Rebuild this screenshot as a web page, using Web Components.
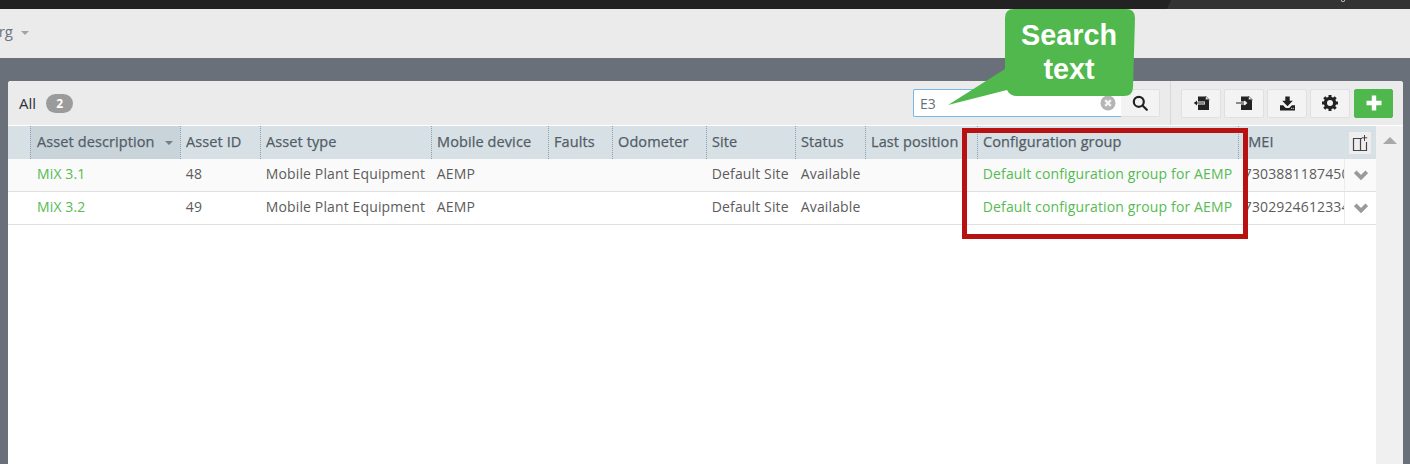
<!DOCTYPE html>
<html>
<head>
<meta charset="utf-8">
<title>Assets</title>
<style>
  html, body { margin: 0; height: 464px; overflow: hidden; }
  body { font-family: "Open Sans", sans-serif; font-size: 14px; background: #697079; }
</style>
</head>
<body>
<app-shell>
  <top-strip></top-strip>
  <org-bar>rg</org-bar>
  <asset-panel>
    <panel-toolbar></panel-toolbar>
    <asset-table></asset-table>
  </asset-panel>
  <help-overlay></help-overlay>
</app-shell>

<script>
class AppShell extends HTMLElement {
    connectedCallback() {
        this.attachShadow({ mode: 'open' });
        this.shadowRoot.innerHTML = `
            <style>
                :host { display: flex; flex-direction: column; height: 464px; position: relative; overflow: hidden; }
            </style>
            <slot></slot>
        `;
    }
}

class TopStrip extends HTMLElement {
    connectedCallback() {
        this.attachShadow({ mode: 'open' });
        this.shadowRoot.innerHTML = `
            <style>
                :host { display: flex; justify-content: flex-end; height: 9px; background: #222; flex: none; }
                .tab { width: 243px; background: #333; clip-path: polygon(4px 0, 100% 0, 100% 100%, 0 100%); overflow: hidden; position: relative; }
                .tab i { position: absolute; left: 174px; top: -1px; width: 4px; height: 3px; border: 1px solid #ddd; border-radius: 2px; box-sizing: border-box; }
            </style>
            <div class="tab"><i></i></div>
        `;
    }
}

class OrgBar extends HTMLElement {
    connectedCallback() {
        this.attachShadow({ mode: 'open' });
        this.shadowRoot.innerHTML = `
            <style>
                :host { display: flex; align-items: center; height: 49px; flex: none; background: #ebebeb; color: #6b7480; font-size: 15px; padding-bottom: 2px; box-sizing: border-box; }
                .caret { width: 0; height: 0; border: 4px solid transparent; border-top: 4px solid #a3a3a3; border-bottom: 0; }
                .clip { width: 13px; overflow: hidden; direction: rtl; margin-right: 8px; margin-top: -3px; }
            </style>
            <div class="clip"><slot></slot></div>
            <span class="caret"></span>
        `;
    }
}

class AssetPanel extends HTMLElement {
    connectedCallback() {
        this.attachShadow({ mode: 'open' });
        this.shadowRoot.innerHTML = `
            <style>
                :host { display: flex; flex-direction: column; flex: 1; margin: 23px 7px 0 8px; background: #fff; border-radius: 3px 3px 0 0; overflow: hidden; }
            </style>
            <slot></slot>
        `;
    }
}

class SearchBox extends HTMLElement {
    connectedCallback() {
        this.attachShadow({ mode: 'open' });
        this.shadowRoot.innerHTML = `
            <style>
                :host { display: flex; height: 28px; }
                .field { width: 208px; box-sizing: border-box; border: 1px solid #7ab8ea; border-right: 0; border-radius: 2px 0 0 2px; background: #fff; color: #66707a; font-size: 14px; display: flex; align-items: center; justify-content: space-between; padding: 0 5px 0 6px; }
                .go { width: 39px; box-sizing: border-box; border: 1px solid #e0e0e0; border-left: 0; border-radius: 0 2px 2px 0; background: #f3f3f3; display: flex; align-items: center; justify-content: center; }
            </style>
            <div class="field">
                <span>E3</span>
                <svg width="16" height="16" viewBox="0 0 16 16">
                    <circle cx="8" cy="8" r="7.5" fill="#b5b5b5"/>
                    <path d="M5.2 5.2l5.6 5.6M10.8 5.2l-5.6 5.6" stroke="#f2f2f2" stroke-width="2.4"/>
                </svg>
            </div>
            <div class="go">
                <svg width="16" height="16" viewBox="0 0 16 16" fill="none" stroke="#222" stroke-width="2.2">
                    <circle cx="6.8" cy="6.8" r="5"/>
                    <path d="M10.5 10.5l4.3 4.3" stroke-linecap="round"/>
                </svg>
            </div>
        `;
    }
}

class ToolButton extends HTMLElement {
    connectedCallback() {
        this.attachShadow({ mode: 'open' });
        this.shadowRoot.innerHTML = `
            <style>
                :host { display: flex; align-items: center; justify-content: center; width: 40px; height: 29px; box-sizing: border-box; border: 1px solid #e0e0e0; border-radius: 2px; background: #f3f3f3; }
                :host([primary]) { width: 39px; border-color: #4fb84c; background: #4fb84c; }
            </style>
            <slot></slot>
        `;
    }
}

class PanelToolbar extends HTMLElement {
    connectedCallback() {
        this.attachShadow({ mode: 'open' });
        this.shadowRoot.innerHTML = `
            <style>
                :host { display: flex; align-items: center; height: 44px; flex: none; background: #ebebeb; padding: 0 10px 0 11px; margin-bottom: 1px; box-sizing: border-box; }
                .all { color: #2c3238; font-size: 15px; font-weight: 400; }
                .count { margin-left: 10px; background: #9b9b9b; color: #fff; font-size: 12px; font-weight: 700; line-height: 19px; width: 27px; text-align: center; border-radius: 10px; }
                search-box { margin-left: auto; }
                .sep { width: 1px; height: 44px; background: #d8d8d8; margin: 0 10px 0 10px; }
                .tools { display: flex; gap: 3px; }
                tool-button[primary] { margin-left: 1px; }
            </style>
            <span class="all">All</span>
            <span class="count">2</span>
            <search-box></search-box>
            <div class="sep"></div>
            <div class="tools">
                <tool-button>
                    <svg width="18" height="16" viewBox="0 0 18 16">
                        <path d="M6 1.500h7l4 4V15H6z" fill="#222"/>
                        <path d="M13.500 1l3.700 3.700h-3.700z" fill="#f3f3f3" stroke="#222" stroke-width=".6"/>
                        <path d="M2 8h11" stroke="#f3f3f3" stroke-width="3"/>
                        <path d="M2.500 8h10" stroke="#222" stroke-width="1.200"/>
                        <path d="M5 5.400L2 8l3 2.600z" fill="#222"/>
                    </svg>
                </tool-button>
                <tool-button>
                    <svg width="18" height="16" viewBox="0 0 18 16">
                        <path d="M6 1.500h7l4 4V15H6z" fill="#222"/>
                        <path d="M13.500 1l3.700 3.700h-3.700z" fill="#f3f3f3" stroke="#222" stroke-width=".6"/>
                        <path d="M1 8h10" stroke="#f3f3f3" stroke-width="3"/>
                        <path d="M1 8h9" stroke="#222" stroke-width="1.200"/>
                        <path d="M9 5.400L12.500 8 9 10.600z" fill="#f3f3f3"/>
                    </svg>
                </tool-button>
                <tool-button>
                    <svg width="15" height="15" viewBox="0 0 17 16">
                        <path d="M6 0h5v5h3.500L8.500 11 2.500 5H6z" fill="#222"/>
                        <path d="M0 10h3.500l3 3h4l3-3H17v6H0z" fill="#222"/>
                        <path d="M12.500 13.500h1.500M15 13.500h1" stroke="#f3f3f3" stroke-width="1"/>
                    </svg>
                </tool-button>
                <tool-button>
                    <svg width="16" height="16" viewBox="0 0 16 16">
                        <circle cx="8" cy="8" r="4.600" fill="none" stroke="#222" stroke-width="3.200"/>
                        <g stroke="#222" stroke-width="3">
                            <path d="M8 0v3M8 13v3M0 8h3M13 8h3M2.300 2.300l2.200 2.200M11.500 11.500l2.200 2.200M13.700 2.300l-2.200 2.200M4.500 11.500l-2.200 2.200"/>
                        </g>
                    </svg>
                </tool-button>
                <tool-button primary>
                    <svg width="16" height="16" viewBox="0 0 16 16">
                        <path d="M8 0.500v15M0.500 8h15" stroke="#fff" stroke-width="4.400"/>
                    </svg>
                </tool-button>
            </div>
        `;
    }
}

const COLS = '22px 150px 80px 171px 117px 64px 94px 89px 70px 112px 261px 106px 32px';

class AssetHead extends HTMLElement {
    connectedCallback() {
        this.attachShadow({ mode: 'open' });
        const labels = ['Asset description', 'Asset ID', 'Asset type', 'Mobile device', 'Faults', 'Odometer', 'Site', 'Status', 'Last position', 'Configuration group', 'IMEI'];
        this.shadowRoot.innerHTML = `
            <style>
                :host { display: grid; grid-template-columns: ${COLS}; height: 33px; background: #d7e0e5; color: #525d67; font-size: 14.500px; letter-spacing: .1px; -webkit-text-stroke: .25px #525d67; }
                .h { border-left: 1px dotted #8aa0ae; padding-left: 5px; line-height: 32px; white-space: nowrap; overflow: hidden; box-sizing: border-box; }
                .sorted { background: #c8d3da; display: flex; justify-content: space-between; padding: 0 7px 0 6px; }
                .caret { align-self: center; width: 0; height: 0; border: 4px solid transparent; border-top: 4px solid #737d85; border-bottom: 0; }
                .toggle { display: flex; align-items: center; justify-content: center; }
                .toggle div { width: 22px; height: 22px; background: #eeeeee; display: flex; align-items: center; justify-content: center; }
            </style>
            <div></div>
            ${labels.map((t, i) => i === 0
                ? `<div class="h sorted"><span>${t}</span><span class="caret"></span></div>`
                : `<div class="h">${t}</div>`).join('')}
            <div class="toggle"><div>
                <svg width="16" height="18" viewBox="0 0 16 18" fill="none" stroke="#444" stroke-width="1.200">
                    <path d="M10 4.500H1.500v12h13V8M8.500 4.500v12"/>
                    <path d="M12.500 1v6M9.800 3.800h5.400" stroke-width="1"/>
                </svg>
            </div></div>
        `;
    }
}

class AssetRow extends HTMLElement {
    connectedCallback() {
        this.attachShadow({ mode: 'open' });
        const c = (this.getAttribute('cells') || '').split('|');
        this.shadowRoot.innerHTML = `
            <style>
                :host { display: grid; grid-template-columns: ${COLS}; height: 33px; box-sizing: border-box; border-bottom: 1px solid #e0e0e0; background: #fff; color: #5c5c5c; font-size: 14px; letter-spacing: .13px; }
                :host([odd]) { background: #fafafa; }
                .d { padding-left: 5.800px; line-height: 30px; white-space: nowrap; overflow: hidden; box-sizing: border-box; }
                .link { color: #55bb52; }
                .first { padding-left: 7px; }
                .act { border-left: 1px solid #ececec; display: flex; align-items: center; justify-content: center; }
            </style>
            <div></div>
            ${c.map((t, i) => `<div class="d ${i === 0 || i === 9 ? 'link' : ''} ${i === 0 ? 'first' : ''}">${t}</div>`).join('')}
            <div class="act">
                <svg width="14" height="10" viewBox="0 0 14 10" fill="none" stroke="#9a9a9a" stroke-width="3.800">
                    <path d="M1.200 1.800L7 7.600l5.800-5.800"/>
                </svg>
            </div>
        `;
    }
}

class AssetTable extends HTMLElement {
    connectedCallback() {
        this.attachShadow({ mode: 'open' });
        this.shadowRoot.innerHTML = `
            <style>
                :host { display: flex; flex: 1; min-height: 0; }
                .body { width: 1368px; flex: none; }
                .bar { flex: 1; background: #f0f0f0; display: flex; justify-content: center; padding-top: 11px; }
                .up { width: 0; height: 0; border: 7.500px solid transparent; border-bottom: 7px solid #a8a8a8; border-top: 0; }
            </style>
            <div class="body">
                <asset-head></asset-head>
                <asset-row odd cells="MiX 3.1|48|Mobile Plant Equipment|AEMP|||Default Site|Available||Default configuration group for AEMP|7303881187450"></asset-row>
                <asset-row cells="MiX 3.2|49|Mobile Plant Equipment|AEMP|||Default Site|Available||Default configuration group for AEMP|7302924612334"></asset-row>
            </div>
            <div class="bar"><div class="up"></div></div>
        `;
    }
}

// annotations drawn on top of the screenshot
class HelpOverlay extends HTMLElement {
    connectedCallback() {
        this.attachShadow({ mode: 'open' });
        this.shadowRoot.innerHTML = `
            <style>
                :host { display: block; position: absolute; inset: 0; pointer-events: none; }
                .mark { position: absolute; left: 962px; top: 128px; width: 286px; height: 111px; box-sizing: border-box; border: 5px solid #b71111; }
                svg { position: absolute; left: 0; top: 0; }
                .say { position: absolute; left: 1005px; top: 18px; width: 128px; text-align: center; color: #fff; font: bold 28.800px/34px "Liberation Sans", Arial, sans-serif; }
            </style>
            <div class="mark"></div>
            <svg width="1410" height="464">
                <path d="M1014 9h112q9 0 9 9l-2 69q0 9-9 9h-107q-7 0-10-6L948 105 1005 69V18q0-9 9-9z" fill="#50b84c"/>
            </svg>
            <div class="say">Search<br>text</div>
        `;
    }
}

customElements.define('app-shell', AppShell);
customElements.define('top-strip', TopStrip);
customElements.define('org-bar', OrgBar);
customElements.define('asset-panel', AssetPanel);
customElements.define('search-box', SearchBox);
customElements.define('tool-button', ToolButton);
customElements.define('panel-toolbar', PanelToolbar);
customElements.define('asset-head', AssetHead);
customElements.define('asset-row', AssetRow);
customElements.define('asset-table', AssetTable);
customElements.define('help-overlay', HelpOverlay);
</script>
</body>
</html>
